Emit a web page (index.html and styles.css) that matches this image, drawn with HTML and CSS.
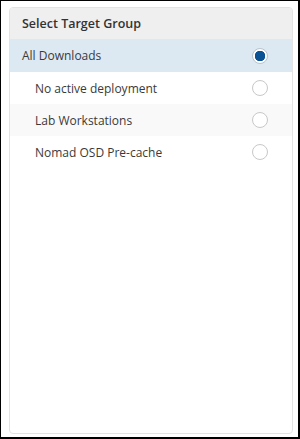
FILE: index.html
```html
<!DOCTYPE html>
<html lang="en">
<head>
    <meta charset="UTF-8">
    <meta name="viewport" content="width=device-width, initial-scale=1.0">
    <title>Select Target Group</title>
    <link rel="stylesheet" href="styles.css">
</head>
<body>
    <div class="moldura">
        <div class="painel">
            <div class="cabecalho">Select Target Group</div>
            <ul class="lista">
                <li class="item selecionado">
                    <span>All Downloads</span>
                    <span class="radio"></span>
                </li>
                <li class="item filho">
                    <span>No active deployment</span>
                    <span class="radio"></span>
                </li>
                <li class="item filho alternado">
                    <span>Lab Workstations</span>
                    <span class="radio"></span>
                </li>
                <li class="item filho">
                    <span>Nomad OSD Pre-cache</span>
                    <span class="radio"></span>
                </li>
            </ul>
        </div>
    </div>
</body>
</html>
```

FILE: styles.css
```css
* {
    box-sizing: border-box;
    margin: 0;
    padding: 0;
    font-family: 'Open Sans', 'Noto Sans', sans-serif;
}

body {
    width: 300px;
    height: 439px;
    background-color: #fff;
    color: #333;
}

.moldura {
    width: 300px;
    height: 439px;
    border: 1px solid #000;
    border-right-width: 2px;
    border-bottom-width: 2px;
    padding: 6px 5px 3px 8px;
}

.painel {
    height: 100%;
    border: 1px solid #e3e3e3;
    border-radius: 4px;
    overflow: hidden;
}

.cabecalho {
    height: 31px;
    padding: 0 12px;
    display: flex;
    align-items: center;
    background-color: #efefef;
    font-size: 12.5px;
    font-weight: 600;
    color: #333;
}

.lista {
    list-style: none;
}

.item {
    height: 32px;
    padding: 0 24px 0 12px;
    display: flex;
    align-items: center;
    justify-content: space-between;
    font-size: 12px;
    color: #3a3a3a;
}

.item.selecionado {
    height: 33px;
    background-color: #dce9f3;
}

.item.filho {
    padding-left: 25px;
}

.item.alternado {
    background-color: #f9f9f9;
}

.radio {
    width: 16px;
    height: 16px;
    border-radius: 50%;
    border: 1px solid #c8c8c8;
    background-color: #fff;
}

.selecionado .radio {
    border-color: #b9c4cc;
    background: radial-gradient(circle, #0b5394 0 5px, #fff 5.5px);
}
```
